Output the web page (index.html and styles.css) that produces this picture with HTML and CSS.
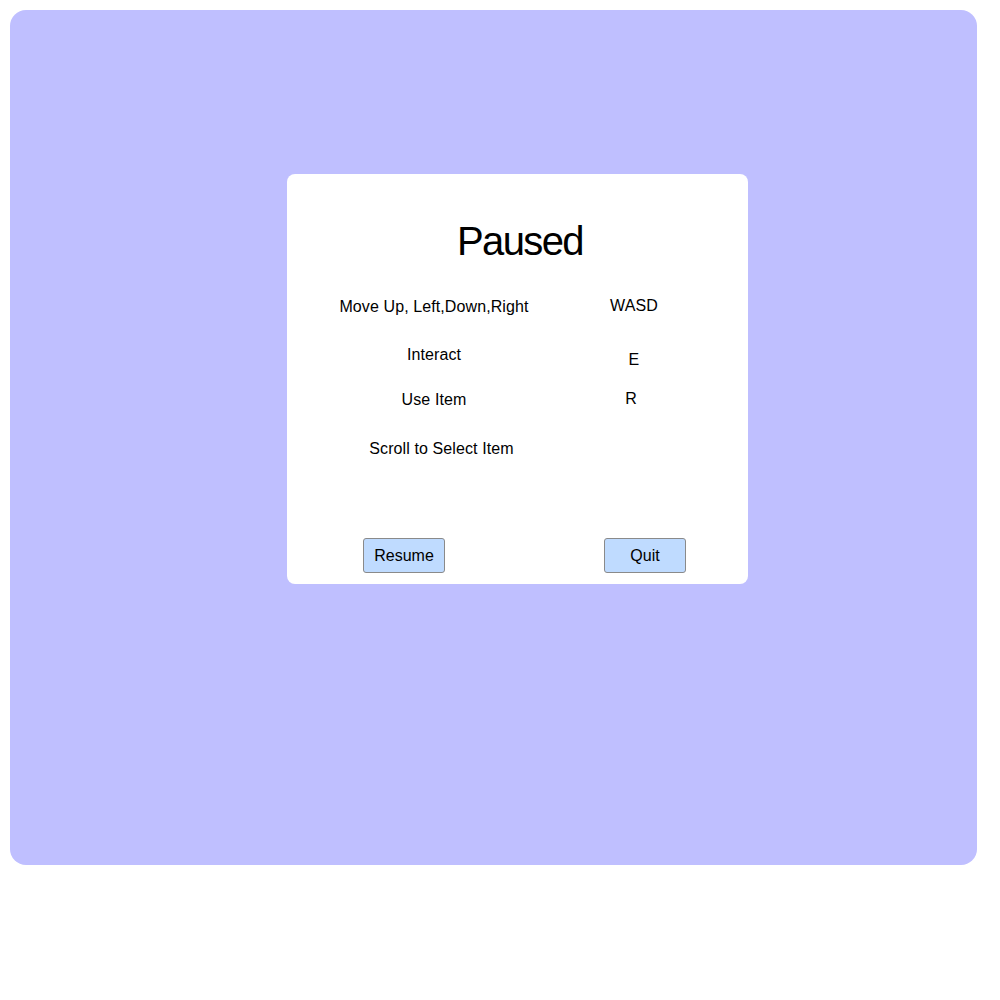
FILE: index.html
```html
<!DOCTYPE html>
<html>
<head>
<meta charset="utf-8">
<link rel="stylesheet" href="styles.css">
</head>
<body>
<div class="stage">
  <div class="card">
    <h1 class="title">Paused</h1>
    <div class="controls">
      <div class="row row-1">
        <div class="cell">Move Up, Left,Down,Right</div>
        <div class="cell key key-wasd">WASD</div>
      </div>
      <div class="row row-2">
        <div class="cell">Interact</div>
        <div class="cell key key-e">E</div>
      </div>
      <div class="row row-3">
        <div class="cell cell-use">Use Item</div>
        <div class="cell key key-r">R</div>
      </div>
      <div class="row row-4">
        <div class="cell cell-scroll">Scroll to Select Item</div>
        <div class="cell key"></div>
      </div>
    </div>
    <div class="actions">
      <button class="btn">Resume</button>
      <button class="btn">Quit</button>
    </div>
  </div>
</div>
</body>
</html>
```
FILE: styles.css
```css
html, body {
  margin: 0;
  padding: 0;
  background: #ffffff;
}

body {
  font-family: "Liberation Sans", Arial, sans-serif;
  color: #000;
}

.stage {
  margin: 10px;
  width: 967px;
  height: 855px;
  box-sizing: border-box;
  background: #bfbfff;
  border-radius: 16px;
  padding: 164px 0 0 277px;
}

.card {
  width: 461px;
  height: 410px;
  box-sizing: border-box;
  background: #ffffff;
  border-radius: 8px;
  padding: 44px 0 0 0;
}

.title {
  margin: 0;
  font-size: 40px;
  font-weight: 400;
  line-height: 46px;
  height: 46px;
  text-align: center;
  letter-spacing: -1.6px;
  padding-left: 5px;
}

.controls {
  margin: 34px 0 0 47px;
  width: 400px;
  font-size: 16px;
  line-height: 18px;
  letter-spacing: 0.1px;
}

.row {
  display: grid;
  grid-template-columns: 200px 200px;
  align-items: start;
}

.row-1 { height: 48px; }
.row-2 { height: 44px; }
.row-3 { height: 50px; }
.row-4 { height: 18px; }

.cell {
  text-align: center;
}

.key-wasd { margin-top: -1px; }
.key-e { padding-top: 5px; }
.cell-use { padding-top: 1px; }
.key-r { padding-right: 6px; }
.cell-scroll { padding-left: 15px; }

.actions {
  display: flex;
  gap: 159px;
  margin-top: 80px;
  padding-left: 76px;
}

.btn {
  width: 82px;
  height: 35px;
  box-sizing: border-box;
  background: #bfdbff;
  border: 1px solid #8a8a8a;
  border-radius: 3px;
  font-family: "Liberation Sans", Arial, sans-serif;
  font-size: 16px;
  color: #000;
  padding: 0;
}
```
